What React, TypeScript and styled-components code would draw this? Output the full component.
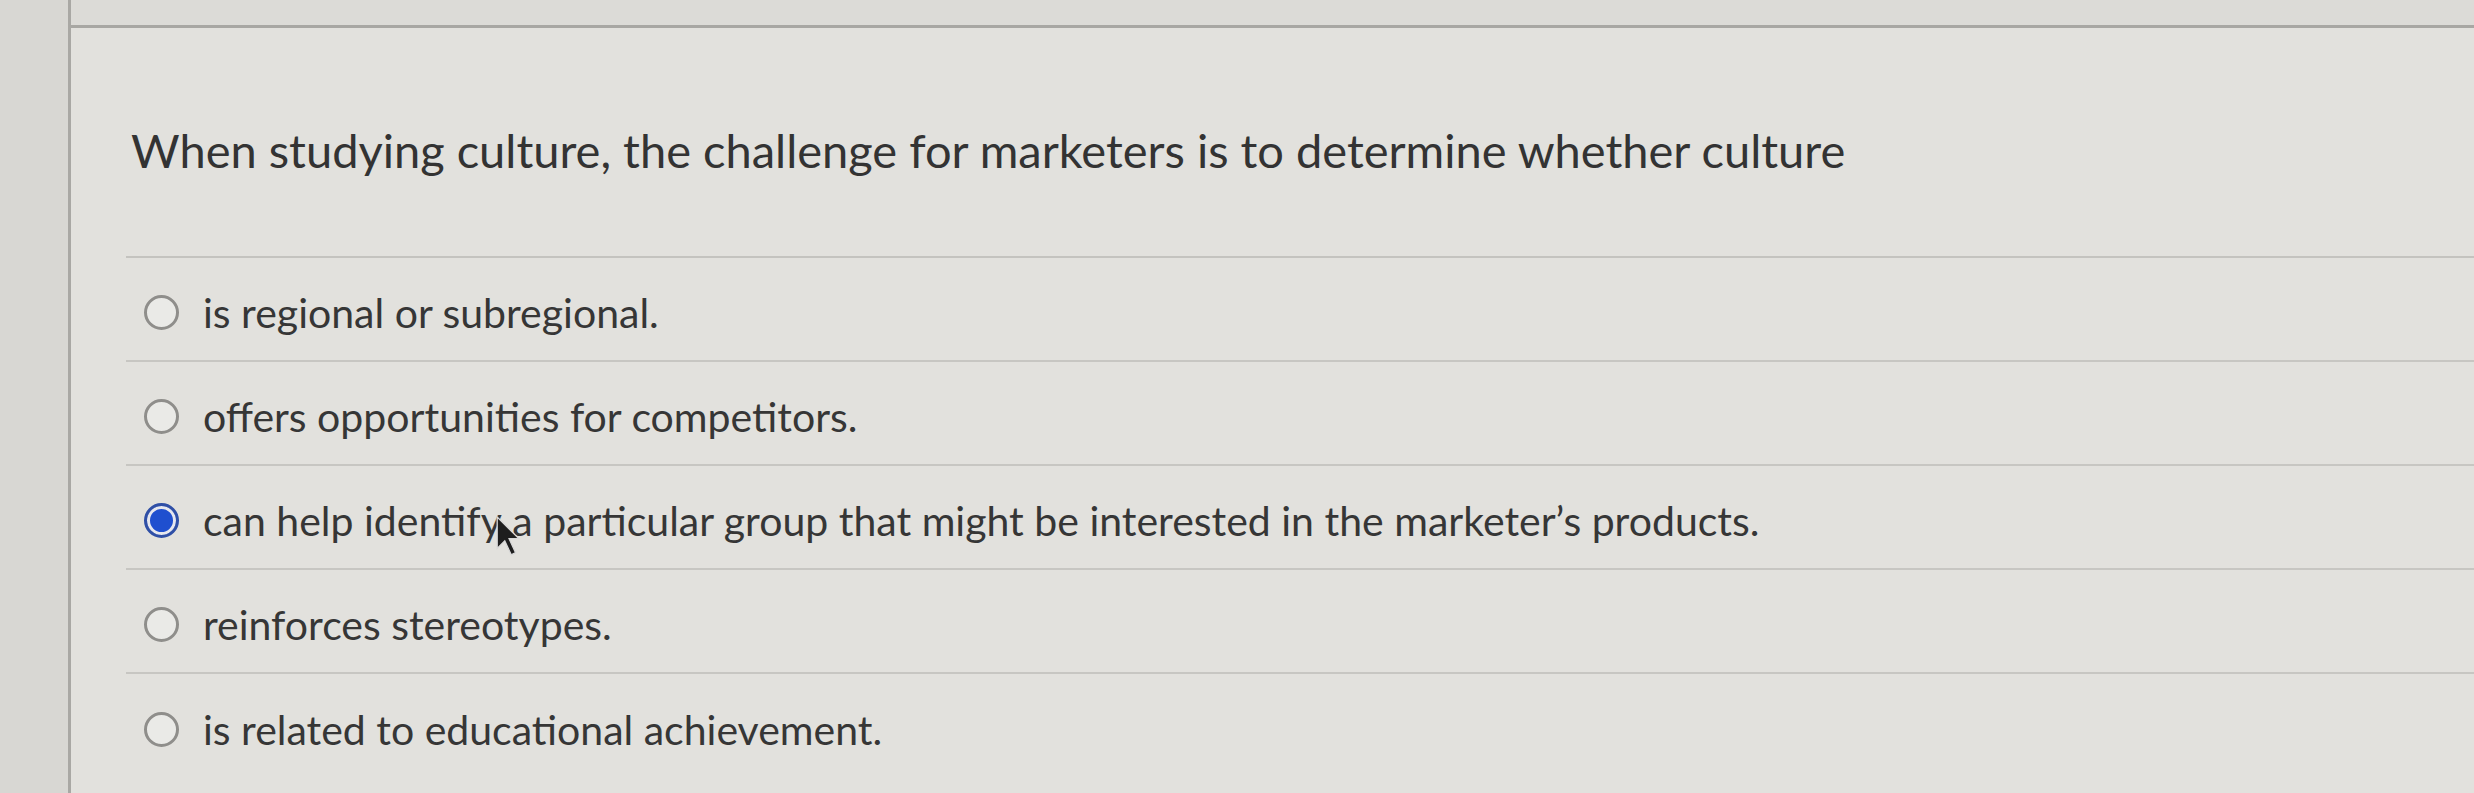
import React, { FC } from 'react';
import styled, { createGlobalStyle } from 'styled-components';

const GlobalStyle = createGlobalStyle`
  html, body {
    margin: 0;
    padding: 0;
    background: #d9d8d4;
  }
  body {
    font-family: Lato, "Open Sans", sans-serif;
    color: #3b3b3b;
  }
`;

const Screen = styled.div`
  display: flex;
  width: 2474px;
  height: 793px;
  overflow: hidden;
`;

const LeftRail = styled.div`
  width: 68px;
  flex-shrink: 0;
  background: #d8d7d3;
  border-right: 3px solid #a9a8a4;
`;

const Panel = styled.div`
  flex: 1;
  display: flex;
  flex-direction: column;
  background: #e2e1dd;
`;

const TopStrip = styled.div`
  height: 25px;
  flex-shrink: 0;
  background: #dcdbd7;
  border-bottom: 3px solid #a8a7a3;
`;

const Question = styled.div`
  margin-left: 55px;
  padding: 96px 0 80px 5px;
  font-size: 47px;
  line-height: 52px;
  color: #333;
  border-bottom: 2px solid #c4c3bf;
`;

const Answers = styled.ul`
  list-style: none;
  margin: 0 0 0 55px;
  padding: 0;
`;

const Answer = styled.li`
  display: flex;
  align-items: center;
  gap: 24px;
  height: 104px;
  padding: 6px 0 0 18px;
  box-sizing: border-box;
  font-size: 41px;
  color: #363636;
  border-bottom: 2px solid #c7c6c2;

  &:last-child {
    border-bottom: none;
  }
`;

const Radio = styled.span<{ $checked?: boolean }>`
  box-sizing: border-box;
  width: 35px;
  height: 35px;
  flex-shrink: 0;
  border-radius: 50%;
  background: #eaeae7;
  border: 3px solid ${({ $checked }) => ($checked ? '#2f4fa6' : '#8f8e8b')};
  box-shadow: ${({ $checked }) => ($checked ? 'inset 0 0 0 3px #e6e7ee, inset 0 0 0 15px #1f4fcf' : 'none')};
`;

const CursorAnchor = styled.span`
  position: relative;
`;

const Cursor = styled.svg`
  position: absolute;
  left: -7px;
  top: 20px;
  width: 26px;
  height: 41px;
`;

interface Option {
  text: string;
  cursorAfter?: string;
}

const answers: Option[] = [
  { text: 'is regional or subregional.' },
  { text: 'offers opportunities for competitors.' },
  {
    text: 'can help identify a particular group that might be interested in the marketer\u2019s products.',
    cursorAfter: 'can help identify',
  },
  { text: 'reinforces stereotypes.' },
  { text: 'is related to educational achievement.' },
];

const selected = 2;

const AnswerText: FC<{ option: Option }> = ({ option }) => {
  if (!option.cursorAfter) return <span>{option.text}</span>;
  const rest = option.text.slice(option.cursorAfter.length);
  return (
    <span>
      {option.cursorAfter}
      <CursorAnchor>
        <Cursor viewBox="0 0 24 38">
          <path d="M2 1 L2 30 L9 23 L15 36 L19 34 L13 21 L22 21 Z" fill="#1e1e1e" stroke="#d8d8d8" strokeWidth="1.2" />
        </Cursor>
      </CursorAnchor>
      {rest}
    </span>
  );
};

const App: FC = () => (
  <Screen>
    <GlobalStyle />
    <LeftRail />
    <Panel>
      <TopStrip />
      <Question>
        When studying culture, the challenge for marketers is to determine whether culture
      </Question>
      <Answers>
        {answers.map((option, i) => (
          <Answer key={option.text}>
            <Radio $checked={i === selected} />
            <AnswerText option={option} />
          </Answer>
        ))}
      </Answers>
    </Panel>
  </Screen>
);

export default App;
